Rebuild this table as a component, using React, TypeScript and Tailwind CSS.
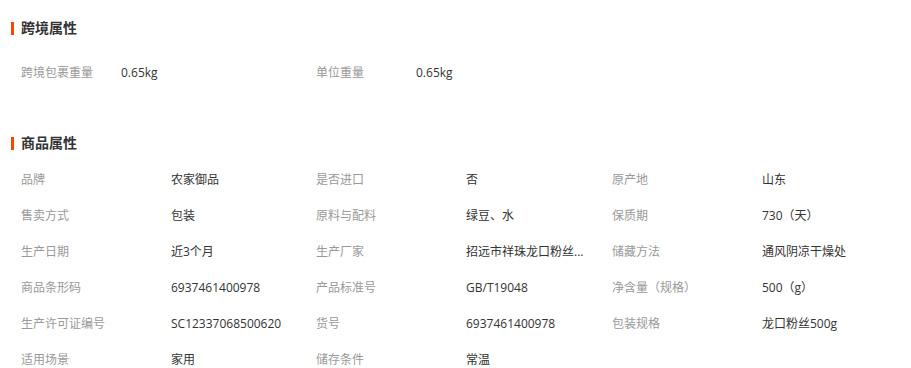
const crossBorder = [
  { label: "跨境包裹重量", value: "0.65kg" },
  { label: "单位重量", value: "0.65kg" },
];

const attributes = [
  { label: "品牌", value: "农家御品" },
  { label: "是否进口", value: "否" },
  { label: "原产地", value: "山东" },
  { label: "售卖方式", value: "包装" },
  { label: "原料与配料", value: "绿豆、水" },
  { label: "保质期", value: "730（天）" },
  { label: "生产日期", value: "近3个月" },
  { label: "生产厂家", value: "招远市祥珠龙口粉丝..." },
  { label: "储藏方法", value: "通风阴凉干燥处" },
  { label: "商品条形码", value: "6937461400978" },
  { label: "产品标准号", value: "GB/T19048" },
  { label: "净含量（规格）", value: "500（g）" },
  { label: "生产许可证编号", value: "SC12337068500620" },
  { label: "货号", value: "6937461400978" },
  { label: "包装规格", value: "龙口粉丝500g" },
  { label: "适用场景", value: "家用" },
  { label: "储存条件", value: "常温" },
];

function SectionTitle({ title }: { title: string }) {
  return (
    <div className="flex h-5 items-center pl-[11px]">
      <span className="h-[13px] w-[3px] bg-[#ff4400]" />
      <h2 className="ml-[7px] text-[14px] font-bold leading-5 text-[#333]">{title}</h2>
    </div>
  );
}

export default function App() {
  return (
    <div
      className="h-[368px] w-[911px] overflow-hidden bg-white text-[12px]"
      style={{ fontFamily: '"Open Sans", "Noto Sans CJK SC", sans-serif' }}
    >
      <section className="pt-[18px]">
        <SectionTitle title="跨境属性" />
        <div className="mt-[17px] flex pl-[21px]">
          {crossBorder.map((item) => (
            <div key={item.label} className="flex h-9 w-[295px] items-center">
              <span className="w-[100px] text-[#999]">{item.label}</span>
              <span className="text-[#333]">{item.value}</span>
            </div>
          ))}
        </div>
      </section>
      <section className="mt-[42px]">
        <SectionTitle title="商品属性" />
        <div className="mt-[9px] grid w-[910px] grid-cols-[295px_296px_296px] pl-[21px]">
          {attributes.map((item) => (
            <div key={item.label} className="flex h-9 items-center">
              <span className="w-[150px] shrink-0 text-[#999]">{item.label}</span>
              <span className="whitespace-nowrap text-[#333]">{item.value}</span>
            </div>
          ))}
        </div>
      </section>
    </div>
  );
}
